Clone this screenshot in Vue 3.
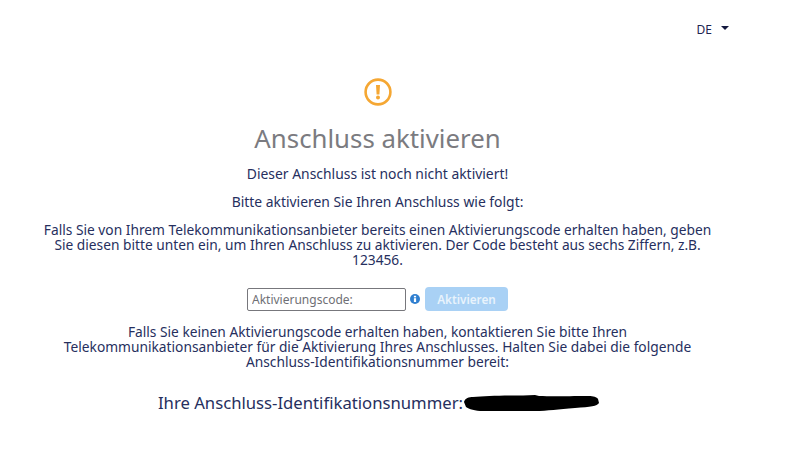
<template>
  <div class="page">
    <div class="topbar">
      <button class="lang">DE <span class="caret"></span></button>
    </div>

    <main class="content">
      <svg class="warn" width="28" height="28" viewBox="0 0 28 28">
        <circle cx="14" cy="14" r="12.4" fill="none" stroke="#f5a733" stroke-width="2.6" />
        <path d="M12 7h4l-.6 9.4h-2.8z" fill="#f5a733" />
        <circle cx="14" cy="19.4" r="2" fill="#f5a733" />
      </svg>

      <h1>Anschluss aktivieren</h1>

      <p class="first">Dieser Anschluss ist noch nicht aktiviert!</p>
      <p>Bitte aktivieren Sie Ihren Anschluss wie folgt:</p>
      <p class="long">
        Falls Sie von Ihrem Telekommunikationsanbieter bereits einen Aktivierungscode erhalten haben, geben
        Sie diesen bitte unten ein, um Ihren Anschluss zu aktivieren. Der Code besteht aus sechs Ziffern, z.B.
        123456.
      </p>

      <form class="code-form" @submit.prevent>
        <input class="code-input" type="text" placeholder="Aktivierungscode:" />
        <svg class="info" width="10" height="10" viewBox="0 0 10 10">
          <circle cx="5" cy="5" r="5" fill="#2f7fd0" />
          <rect x="3.9" y="4.2" width="2.2" height="3.8" fill="#fff" />
          <rect x="3.9" y="1.8" width="2.2" height="1.6" fill="#fff" />
        </svg>
        <button class="submit" disabled>Aktivieren</button>
      </form>

      <p class="long">
        Falls Sie keinen Aktivierungscode erhalten haben, kontaktieren Sie bitte Ihren
        Telekommunikationsanbieter für die Aktivierung Ihres Anschlusses. Halten Sie dabei die folgende
        Anschluss-Identifikationsnummer bereit:
      </p>

      <div class="ident">
        <span>Ihre Anschluss-Identifikationsnummer:</span>
        <svg class="scribble" width="137" height="18" viewBox="0 0 137 18">
          <path d="M1 8 C2 4 6 3 10 3 C22 2 40 1.5 60 1.5 L72 1 L76 2 C90 2.5 115 2 126 2 C130 2 134 3 135 5 L136 9 C134 12 128 13 112 14 C95 15 85 17 72 17 C55 17 36 17 20 17 C12 17 6 15 3 13 Z" fill="#000" />
        </svg>
      </div>
    </main>
  </div>
</template>

<script setup>
</script>

<style scoped>
.page {
  width: 794px;
  height: 456px;
  box-sizing: border-box;
  background: #fff;
  color: #262f5e;
  font-family: "Noto Sans", sans-serif;
  font-size: 13.9px;
  overflow: hidden;
}

.topbar {
  display: flex;
  justify-content: flex-end;
  padding: 21px 65px 0 0;
}

.lang {
  display: flex;
  align-items: center;
  gap: 9px;
  padding: 0;
  border: none;
  background: none;
  color: #1d2450;
  font-family: inherit;
  font-size: 12px;
  line-height: 17px;
}

.caret {
  width: 0;
  height: 0;
  border-left: 4px solid transparent;
  border-right: 4px solid transparent;
  border-top: 4px solid #14193f;
  margin-bottom: 3px;
}

.content {
  width: 755px;
  display: flex;
  flex-direction: column;
  align-items: center;
  text-align: center;
  padding-top: 40px;
}

.warn {
  display: block;
}

h1 {
  margin: 15px 0 0;
  color: #7b7b80;
  font-size: 25.8px;
  font-weight: 400;
  line-height: 34px;
}

p {
  width: 685px;
  margin: 13px 0 0;
  line-height: 15px;
}

p.first {
  margin-top: 11px;
}

p.long {
  font-size: 13.75px;
}

.code-form {
  display: flex;
  align-items: center;
  margin-top: 20px;
  margin-bottom: 0;
}

.code-input {
  width: 159px;
  height: 23px;
  box-sizing: border-box;
  padding: 0 4px;
  border: 1px solid #77777c;
  border-radius: 2px;
  font-family: inherit;
  font-size: 12px;
}

.code-input::placeholder {
  color: #6f6f75;
  opacity: 1;
}

.info {
  margin-left: 4px;
}

.submit {
  width: 83px;
  height: 24px;
  margin-left: 5px;
  padding: 0;
  border: none;
  border-radius: 4px;
  background: #a9d1f5;
  color: #e8f3fc;
  font-family: inherit;
  font-size: 11.7px;
  font-weight: 600;
}

.ident {
  display: flex;
  align-items: center;
  margin: 22px 0 0 3px;
  color: #262f5e;
  font-size: 16.7px;
  line-height: 24px;
}
</style>
